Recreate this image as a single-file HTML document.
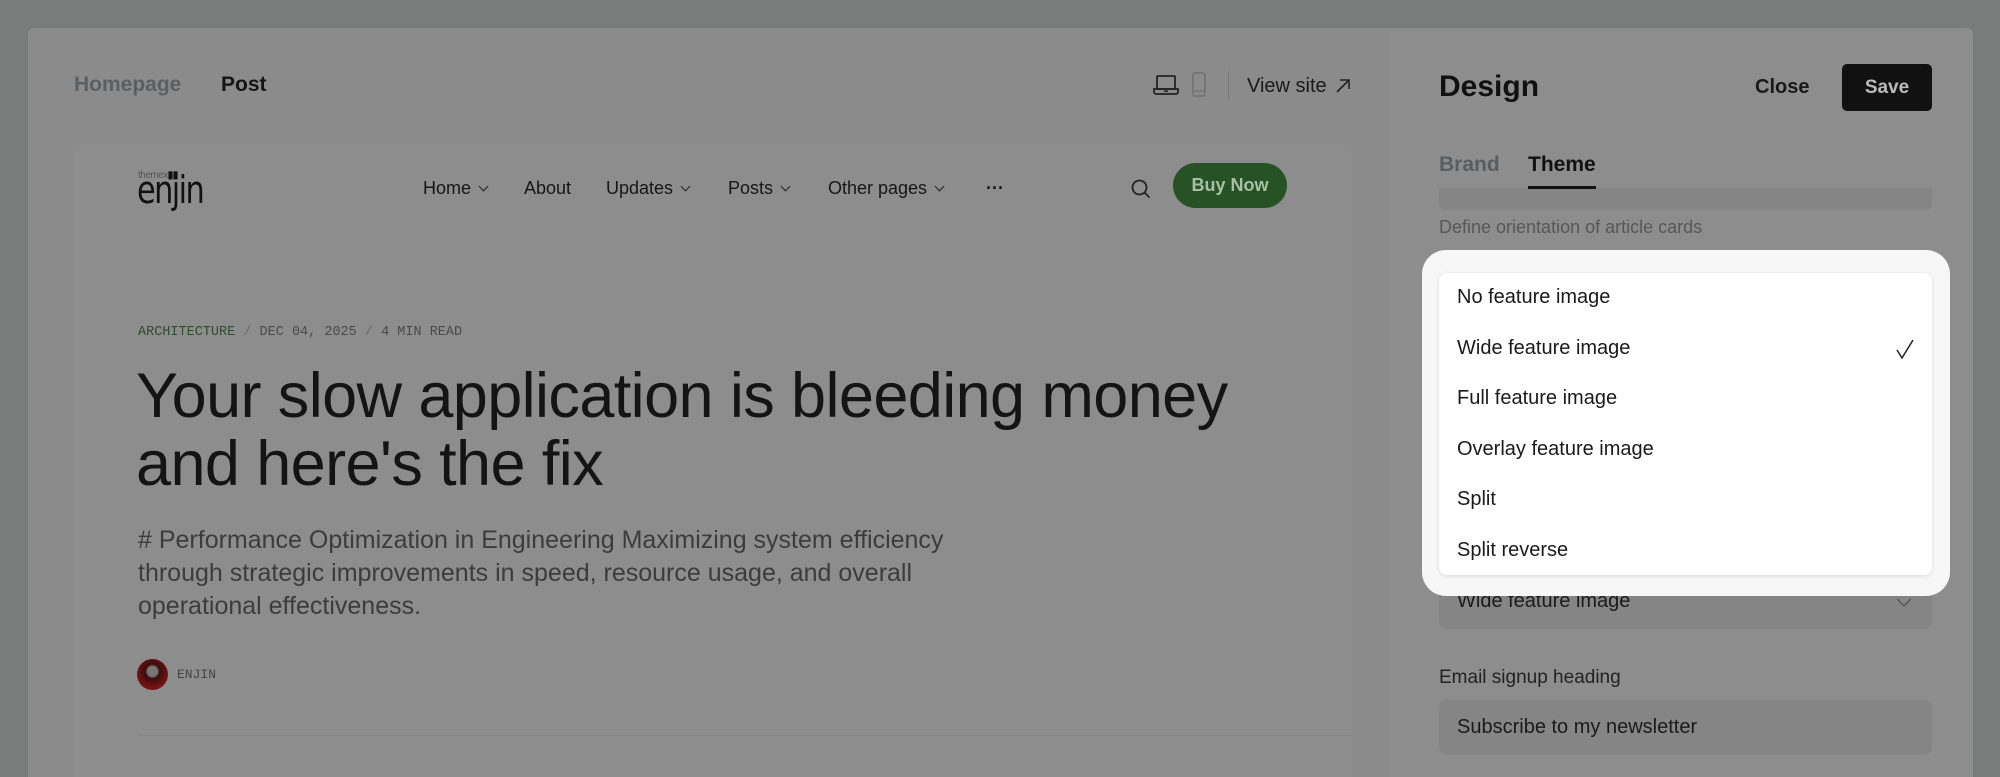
<!DOCTYPE html>
<html><head><meta charset="utf-8"><style>
*{margin:0;padding:0;box-sizing:border-box}
html,body{width:2000px;height:777px;overflow:hidden}
body{background:#7a7c7c;font-family:"Liberation Sans",sans-serif;position:relative;color:#151515}
.a{position:absolute;white-space:nowrap}
.card{position:absolute;left:28px;top:28px;width:1945px;height:749px;background:#8b8b8b;border-radius:6px 6px 0 0}
.side{position:absolute;left:1390px;top:28px;width:583px;height:749px;background:#8d8d8d;border-radius:0 6px 0 0}
.prev{position:absolute;left:74px;top:144px;width:1278px;height:633px;background:#8d8d8d;border-radius:6px 6px 0 0}
.nav{font-size:18px;color:#161616;top:178px}
.chev{display:inline-block;width:7px;height:7px;border-right:1.6px solid #222;border-bottom:1.6px solid #222;transform:rotate(45deg);margin-left:9px;position:relative;top:-4px}
.mono{font-family:"Liberation Mono",monospace;font-size:14px}
.item{left:1457px;font-size:20px;color:#1a1a1a}
</style></head><body>
<div class="card"></div>
<div class="side"></div>
<div class="a" style="left:74px;top:73px;font-size:21px;font-weight:bold;color:#5c5f62">Homepage</div>
<div class="a" style="left:221px;top:73px;font-size:21px;font-weight:bold;color:#151515">Post</div>
<svg class="a" style="left:1153px;top:74px" width="26" height="22" viewBox="0 0 26 22"><rect x="4" y="2" width="18" height="13" rx="1" fill="none" stroke="#222" stroke-width="1.8"/><path d="M1 15h24v3a2 2 0 0 1-2 2H3a2 2 0 0 1-2-2z" fill="none" stroke="#222" stroke-width="1.8"/><rect x="11" y="16.5" width="4" height="1.5" fill="#222"/></svg>
<svg class="a" style="left:1192px;top:72px" width="14" height="26" viewBox="0 0 14 26"><rect x="1" y="1" width="12" height="23" rx="2" fill="none" stroke="#707070" stroke-width="1.5"/><path d="M1 19h12" stroke="#707070" stroke-width="1.2"/></svg>
<div class="a" style="left:1228px;top:70px;width:1px;height:30px;background:#7a7a7a"></div>
<div class="a" style="left:1247px;top:75px;font-size:20px;color:#1a1a1a">View site</div>
<svg class="a" style="left:1334px;top:77px" width="18" height="18" viewBox="0 0 18 18"><path d="M3 15L15 3M6 3h9v9" fill="none" stroke="#222" stroke-width="1.6"/></svg>

<div class="prev"></div>
<div class="a" style="left:138px;top:170px;font-size:10px;color:#555;letter-spacing:-0.5px">themex<b style="color:#111">▮▮</b></div>
<div class="a" style="left:137px;top:168px;font-size:38px;color:#111;font-family:'DejaVu Sans',sans-serif;letter-spacing:-2px;transform:scaleX(0.8);transform-origin:left">enjin</div>
<div class="a nav" style="left:423px">Home<span class="chev"></span></div>
<div class="a nav" style="left:524px">About</div>
<div class="a nav" style="left:606px">Updates<span class="chev"></span></div>
<div class="a nav" style="left:728px">Posts<span class="chev"></span></div>
<div class="a nav" style="left:828px">Other pages<span class="chev"></span></div>
<div class="a nav" style="left:986px;top:178px;font-weight:bold">···</div>
<svg class="a" style="left:1130px;top:178px" width="22" height="22" viewBox="0 0 22 22"><circle cx="9.5" cy="9.5" r="7" fill="none" stroke="#222" stroke-width="1.8"/><path d="M14.5 14.5l5 5" stroke="#222" stroke-width="1.8"/></svg>
<div class="a" style="left:1173px;top:163px;width:114px;height:45px;border-radius:23px;background:#265226;color:#a9bfa6;font-size:18px;font-weight:bold;text-align:center;line-height:45px">Buy Now</div>

<div class="a mono" style="left:138px;top:325px;color:#2c4e2c;font-size:13.5px">ARCHITECTURE <span style="color:#6a6a6a">/</span> <span style="color:#4a4a4a">DEC 04, 2025 <span style="color:#6a6a6a">/</span> 4 MIN READ</span></div>
<div class="a" style="left:136px;top:362px;font-size:63px;color:#141414;line-height:68px;letter-spacing:-0.6px">Your slow application is bleeding money<br>and here's the fix</div>
<div class="a" style="left:138px;top:524px;font-size:25px;color:#3c3c3c;line-height:33px">#&nbsp;Performance Optimization in Engineering Maximizing system efficiency<br>through strategic improvements in speed, resource usage, and overall<br>operational effectiveness.</div>
<div class="a" style="left:137px;top:659px;width:31px;height:31px;border-radius:50%;background:radial-gradient(circle at 50% 40%,#777 0 20%,#3a0c0c 30%,#7a1414 70%)"></div>
<div class="a mono" style="left:177px;top:667px;color:#444;font-size:13px">ENJIN</div>
<div class="a" style="left:138px;top:735px;width:1214px;height:1px;background:#858585"></div>

<div class="a" style="left:1439px;top:70px;font-size:30px;font-weight:bold;color:#111">Design</div>
<div class="a" style="left:1755px;top:76px;font-size:20px;font-weight:bold;color:#1a1a1a">Close</div>
<div class="a" style="left:1842px;top:64px;width:90px;height:47px;background:#111;border-radius:5px;color:#bbb;font-size:19px;font-weight:bold;text-align:center;line-height:47px">Save</div>
<div class="a" style="left:1439px;top:153px;font-size:21px;font-weight:bold;color:#5a5d60">Brand</div>
<div class="a" style="left:1528px;top:153px;font-size:21px;font-weight:bold;color:#111">Theme</div>
<div class="a" style="left:1439px;top:188px;width:493px;height:22px;background:#858585;border-radius:0 0 6px 6px"></div>
<div class="a" style="left:1528px;top:186px;width:68px;height:3px;background:#111"></div>
<div class="a" style="left:1439px;top:217px;font-size:18px;color:#575757">Define orientation of article cards</div>

<div class="a" style="left:1439px;top:574px;width:493px;height:55px;background:#858585;border-radius:8px"></div>
<div class="a" style="left:1457px;top:590px;font-size:20px;color:#1a1a1a">Wide feature image</div>
<svg class="a" style="left:1896px;top:597px" width="16" height="12" viewBox="0 0 16 12"><path d="M1 2l7 7 7-7" fill="none" stroke="#555" stroke-width="1.4"/></svg>
<div class="a" style="left:1439px;top:667px;font-size:19px;color:#222">Email signup heading</div>
<div class="a" style="left:1439px;top:700px;width:493px;height:55px;background:#858585;border-radius:8px"></div>
<div class="a" style="left:1457px;top:716px;font-size:20px;color:#1a1a1a">Subscribe to my newsletter</div>

<div class="a" style="left:1422px;top:250px;width:528px;height:346px;background:#f7f7f7;border-radius:24px"></div>
<div class="a" style="left:1439px;top:273px;width:493px;height:302px;background:#fff;border-radius:8px;box-shadow:0 1px 4px rgba(0,0,0,.12)"></div>
<div class="a item" style="top:286px">No feature image</div>
<div class="a item" style="top:337px">Wide feature image</div>
<svg class="a" style="left:1895px;top:338px" width="20" height="22" viewBox="0 0 20 22"><path d="M2 12l5 8L18 2" fill="none" stroke="#222" stroke-width="1.5"/></svg>
<div class="a item" style="top:387px">Full feature image</div>
<div class="a item" style="top:438px">Overlay feature image</div>
<div class="a item" style="top:488px">Split</div>
<div class="a item" style="top:539px">Split reverse</div>
</body></html>
